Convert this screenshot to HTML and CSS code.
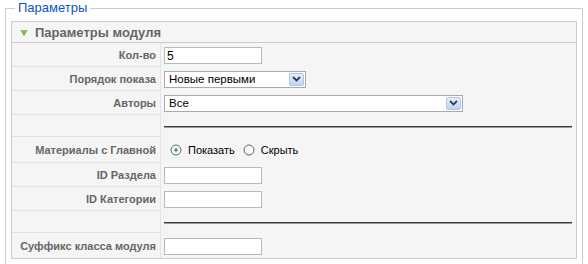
FILE: index.html
```html
<!DOCTYPE html>
<html lang="ru">
<head>
    <meta charset="UTF-8" />
    <title>Параметры модуля</title>
    <link rel="stylesheet" href="styles.css">
</head>
<body>

    <fieldset class="adminform">
        <legend>Параметры</legend>

        <div class="panel">
            <h3 class="title">
                <svg class="toggler" width="8" height="6" viewBox="0 0 8 6">
                    <defs>
                        <linearGradient id="tg" x1="0" y1="0" x2="0" y2="1">
                            <stop offset="0" stop-color="#9ccc78"/>
                            <stop offset="1" stop-color="#5e9e32"/>
                        </linearGradient>
                    </defs>
                    <polygon points="0,0 8,0 4,6" fill="url(#tg)"/>
                </svg>
                Параметры модуля
            </h3>

            <div class="paramlist">
                <div class="row">
                    <div class="key">Кол-во</div>
                    <div class="value"><input type="text" class="text" value="5"></div>
                </div>

                <div class="row">
                    <div class="key">Порядок показа</div>
                    <div class="value">
                        <div class="select select-short">
                            <span class="select-text">Новые первыми</span>
                            <span class="select-btn">
                                <svg width="9" height="6" viewBox="0 0 9 6"><polyline points="1,1 4.5,4.5 8,1" fill="none" stroke="#2b3f66" stroke-width="1.8"/></svg>
                            </span>
                        </div>
                    </div>
                </div>

                <div class="row">
                    <div class="key">Авторы</div>
                    <div class="value">
                        <div class="select select-long">
                            <span class="select-text">Все</span>
                            <span class="select-btn">
                                <svg width="9" height="6" viewBox="0 0 9 6"><polyline points="1,1 4.5,4.5 8,1" fill="none" stroke="#2b3f66" stroke-width="1.8"/></svg>
                            </span>
                        </div>
                    </div>
                </div>

                <div class="row row-spacer">
                    <div class="key"></div>
                    <div class="value"><div class="spacer-line"></div></div>
                </div>

                <div class="row row-radio">
                    <div class="key">Материалы с Главной</div>
                    <div class="value">
                        <label class="radio">
                            <svg width="12" height="12" viewBox="0 0 12 12">
                                <circle cx="6" cy="6" r="5" fill="#fafafa" stroke="#5d6570"/>
                                <circle cx="6" cy="6" r="1.8" fill="#3aa63a"/>
                            </svg>
                            Показать
                        </label>
                        <label class="radio">
                            <svg width="12" height="12" viewBox="0 0 12 12">
                                <circle cx="6" cy="6" r="5" fill="#fafafa" stroke="#5d6570"/>
                            </svg>
                            Скрыть
                        </label>
                    </div>
                </div>

                <div class="row">
                    <div class="key">ID Раздела</div>
                    <div class="value"><input type="text" class="text" value=""></div>
                </div>

                <div class="row">
                    <div class="key">ID Категории</div>
                    <div class="value"><input type="text" class="text" value=""></div>
                </div>

                <div class="row row-spacer">
                    <div class="key"></div>
                    <div class="value"><div class="spacer-line"></div></div>
                </div>

                <div class="row row-last">
                    <div class="key">Суффикс класса модуля</div>
                    <div class="value"><input type="text" class="text" value=""></div>
                </div>
            </div>
        </div>
    </fieldset>

</body>
</html>
```

FILE: styles.css
```css
body {
    margin: 0;
    background-color: #fff;
    font-family: "Liberation Sans", Arial, sans-serif;
    font-size: 11px;
    color: #333;
}

.adminform {
    margin: 0 5px 0 5px;
    padding: 5px 5px 5px 5px;
    border: 1px solid #ccc;
}

.adminform legend {
    color: #0b55c4;
    font-size: 13px;
    line-height: 16px;
    padding: 0 3px;
    margin-left: 4px;
}

.panel {
    border: 1px solid #ccc;
    background-color: #f5f5f5;
}

.title {
    margin: 0;
    height: 20px;
    border-bottom: 1px solid #ccc;
    display: flex;
    align-items: center;
    padding-left: 8px;
    font-size: 13px;
    font-weight: bold;
    color: #666;
}

.toggler {
    margin-right: 7px;
    margin-top: 1px;
}

.row {
    display: flex;
    height: 24px;
}

.row-spacer {
    height: 22px;
}

.row-radio {
    height: 26px;
}

.row-last {
    height: 25px;
}

.key {
    width: 149px;
    box-sizing: border-box;
    flex-shrink: 0;
    display: flex;
    align-items: center;
    justify-content: flex-end;
    padding-right: 4px;
    border-right: 1px solid #e3e3e3;
    border-bottom: 1px solid #e3e3e3;
    font-weight: bold;
    color: #666;
}

.row-last .key {
    border-bottom: none;
}

.value {
    flex: 1;
    display: flex;
    align-items: center;
    padding-left: 3px;
}

.text {
    width: 98px;
    height: 17px;
    box-sizing: border-box;
    margin: 1px 0 0 0;
    padding: 0 2px;
    border: 1px solid #b9b9b9;
    background: #fff;
    font-family: "Liberation Sans", Arial, sans-serif;
    font-size: 12px;
    color: #000;
}

.select {
    height: 17px;
    box-sizing: border-box;
    display: flex;
    align-items: center;
    justify-content: space-between;
    border: 1px solid #a7abb0;
    background: #fff;
    font-size: 11.5px;
    color: #000;
}

.select-short {
    width: 142px;
}

.select-long {
    width: 299px;
}

.select-text {
    padding-left: 4px;
}

.select-btn {
    width: 15px;
    height: 13px;
    margin-right: 1px;
    box-sizing: border-box;
    display: flex;
    align-items: center;
    justify-content: center;
    border: 1px solid #b6c6e2;
    border-radius: 2px;
    background: linear-gradient(#e6eefb, #c4d4ef);
}

.spacer-line {
    flex: 1;
    margin: 0 4px 0 0;
    height: 1px;
    background: #3c3c3c;
    border-bottom: 1px solid #9a9a9a;
    margin-top: 2px;
}

.radio {
    display: flex;
    align-items: center;
    margin-left: 6px;
    margin-right: 2px;
    font-size: 11px;
    color: #000;
}

.radio svg {
    margin-right: 6px;
}
```
